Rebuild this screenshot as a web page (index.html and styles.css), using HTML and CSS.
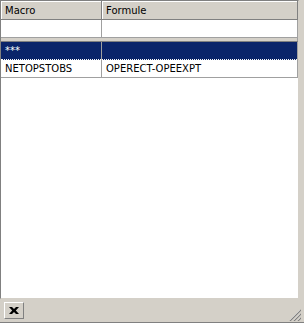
FILE: index.html
```html
<!DOCTYPE html>
<html lang="en">
<head>
  <meta charset="UTF-8">
  <title>Macros</title>
  <link rel="stylesheet" href="styles.css">
</head>
<body>
  <div class="panel">
    <div class="grid">
      <table class="macros">
        <thead>
          <tr>
            <th class="col-macro">Macro</th>
            <th>Formule</th>
          </tr>
        </thead>
        <tbody>
          <tr class="filter">
            <td></td>
            <td></td>
          </tr>
          <tr class="spacer">
            <td colspan="2"></td>
          </tr>
          <tr class="selected">
            <td>***</td>
            <td></td>
          </tr>
          <tr>
            <td>NETOPSTOBS</td>
            <td>OPERECT-OPEEXPT</td>
          </tr>
        </tbody>
      </table>
    </div>
    <div class="statusbar">
      <button class="close" title="Fermer">
        <svg width="10" height="7" viewBox="0 0 10 7">
          <path d="M0 0h3l2 2l2-2h3l-3.2 3.5l3.2 3.5h-3l-2-2l-2 2h-3l3.2-3.5z" fill="#000"/>
        </svg>
      </button>
      <div class="grip">
        <svg width="12" height="12" viewBox="0 0 12 12">
          <path d="M11 1L1 11M11 5L5 11M11 9L9 11" stroke="#fff" stroke-width="1"/>
          <path d="M12 1L1 12M12 5L5 12M12 9L9 12" stroke="#808080" stroke-width="1.2"/>
        </svg>
      </div>
    </div>
  </div>
</body>
</html>
```

FILE: styles.css
```css
body {
  margin: 0;
  font-family: "DejaVu Sans", Tahoma, sans-serif;
  font-size: 10px;
  background-color: #d4d0c8;
}
.panel {
  width: 304px;
  height: 323px;
  display: flex;
  flex-direction: column;
  background-color: #d4d0c8;
  box-sizing: border-box;
  border-bottom: 1px solid #808080;
}
.grid {
  height: 299px;
  width: 299px;
  box-sizing: border-box;
  background-color: #fff;
  border-left: 1px solid #808080;
  border-top: 1px solid #808080;
  border-right: 1px solid #d4d0c8;
  border-bottom: 1px solid #d4d0c8;
  overflow: hidden;
}
.macros {
  border-collapse: collapse;
  width: 297px;
  table-layout: fixed;
}
.macros th {
  background-color: #d4d0c8;
  font-weight: normal;
  text-align: left;
  height: 18px;
  padding: 0 4px;
  border-right: 1px solid #808080;
  border-bottom: 1px solid #808080;
  box-shadow: inset 1px 1px 0 #fff;
}
.col-macro {
  width: 92px;
}
.macros td {
  height: 17px;
  padding: 0 4px;
  border-right: 1px solid #a0a0a0;
  border-bottom: 1px solid #a0a0a0;
  white-space: nowrap;
}
.macros .spacer td {
  height: 3px;
  padding: 0;
  background-color: #d4d0c8;
  border-bottom: 1px solid #808080;
}
.macros .selected td {
  background-color: #0a246a;
  color: #fff;
  border-top: 1px dotted #fff;
  border-bottom: 1px dotted #fff;
}
.statusbar {
  flex: 1;
  display: flex;
  align-items: center;
  justify-content: space-between;
  padding: 0 3px 0 4px;
}
.close {
  width: 20px;
  height: 17px;
  padding: 0;
  background-color: #d4d0c8;
  border: 1px solid;
  border-color: #fff #808080 #808080 #fff;
  display: flex;
  align-items: center;
  justify-content: center;
}
.grip {
  align-self: flex-end;
  width: 12px;
  height: 12px;
  margin-bottom: 1px;
}
```
